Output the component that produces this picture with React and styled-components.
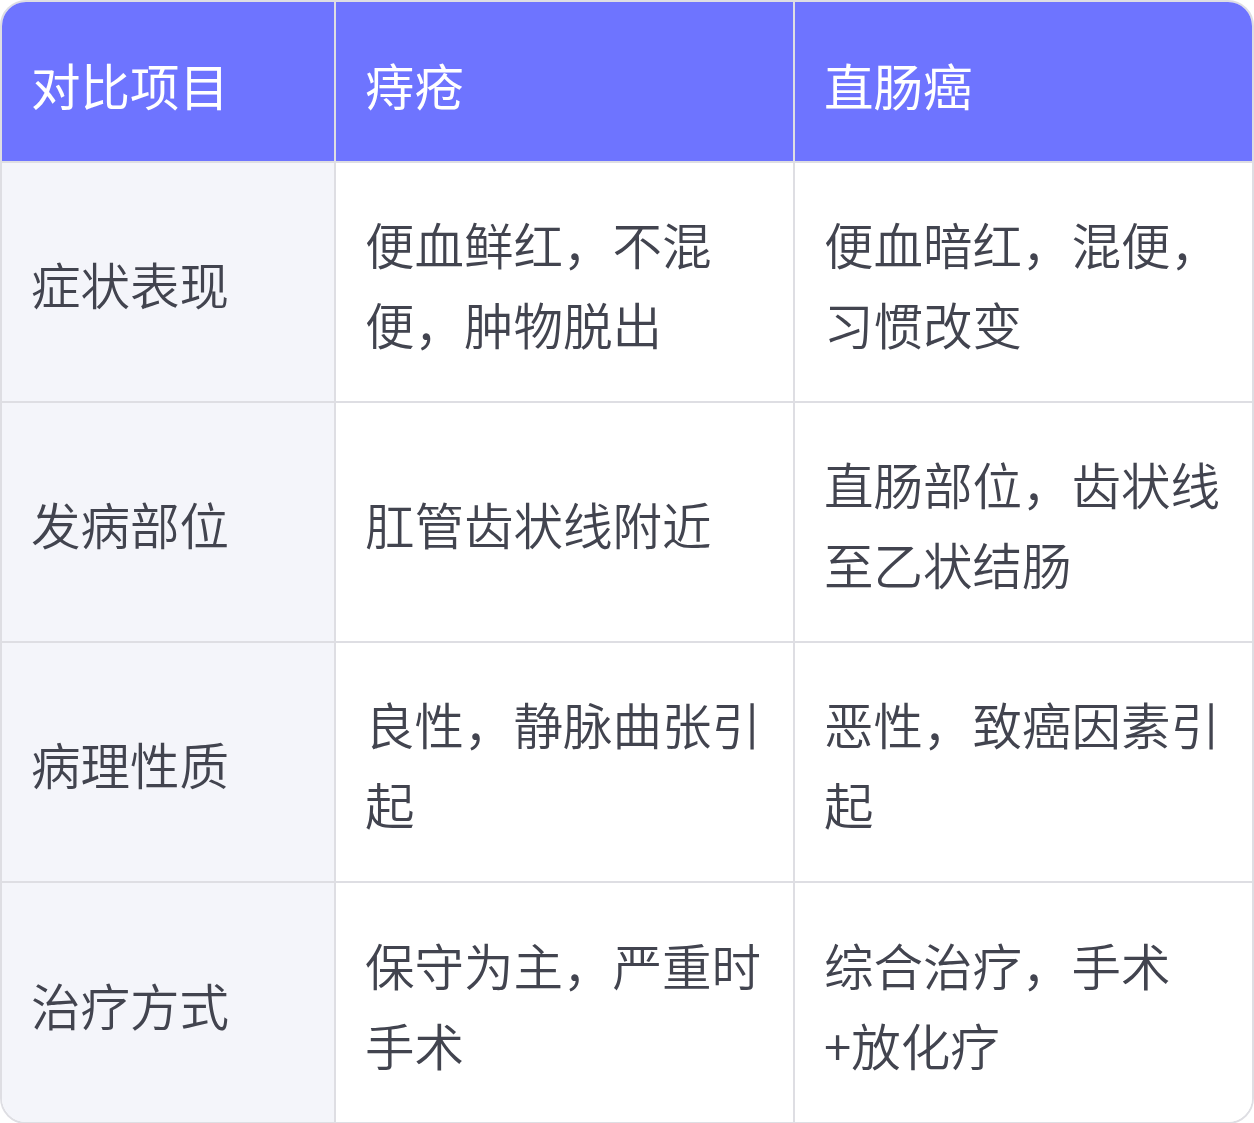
import React from 'react'
import styled, { createGlobalStyle } from 'styled-components'

const GlobalStyle = createGlobalStyle`
    html, body {
        margin: 0;
        padding: 0;
        background: #ffffff;
    }
    body {
        font-family: "Noto Sans CJK SC", "Noto Sans", sans-serif;
    }
`

const Frame = styled.div`
    width: 1254px;
    box-sizing: border-box;
    border: 2px solid #dedee3;
    border-radius: 26px;
    overflow: hidden;
`

const Table = styled.table`
    width: 100%;
    border-collapse: collapse;
    table-layout: fixed;
`

const HeadCell = styled.th`
    height: 160px;
    box-sizing: border-box;
    padding: 6px 28px 0 29px;
    background: #6e74ff;
    color: #ffffff;
    font-size: 49.5px;
    font-weight: 400;
    line-height: 80px;
    text-align: left;
    vertical-align: middle;
    border-right: 2px solid #dedee3;
    border-bottom: 2px solid #dedee3;
    &:last-child {
        border-right: none;
    }
`

const Row = styled.tr`
    &:last-child td {
        border-bottom: none;
    }
`

const Cell = styled.td`
    height: 240px;
    box-sizing: border-box;
    padding: 4px 28px 0 29px;
    background: ${p => (p.$label ? '#f4f5fa' : '#ffffff')};
    color: #42444f;
    font-size: 49.5px;
    font-weight: 350;
    line-height: 80px;
    vertical-align: middle;
    border-right: 2px solid #dedee3;
    border-bottom: 2px solid #dedee3;
    &:last-child {
        border-right: none;
    }
`

const rows = [
    ['症状表现', '便血鲜红，不混便，肿物脱出', '便血暗红，混便，习惯改变'],
    ['发病部位', '肛管齿状线附近', '直肠部位，齿状线至乙状结肠'],
    ['病理性质', '良性，静脉曲张引起', '恶性，致癌因素引起'],
    ['治疗方式', '保守为主，严重时手术', '综合治疗，手术+放化疗'],
]

const App = () => {
    return (
        <>
            <GlobalStyle />
            <Frame>
                <Table>
                    <colgroup>
                        <col style={{ width: 333 }} />
                        <col style={{ width: 459 }} />
                        <col />
                    </colgroup>
                    <thead>
                        <tr>
                            <HeadCell>对比项目</HeadCell>
                            <HeadCell>痔疮</HeadCell>
                            <HeadCell>直肠癌</HeadCell>
                        </tr>
                    </thead>
                    <tbody>
                        {rows.map(r => (
                            <Row key={r[0]}>
                                <Cell $label>{r[0]}</Cell>
                                <Cell>{r[1]}</Cell>
                                <Cell>{r[2]}</Cell>
                            </Row>
                        ))}
                    </tbody>
                </Table>
            </Frame>
        </>
    )
}

export default App
